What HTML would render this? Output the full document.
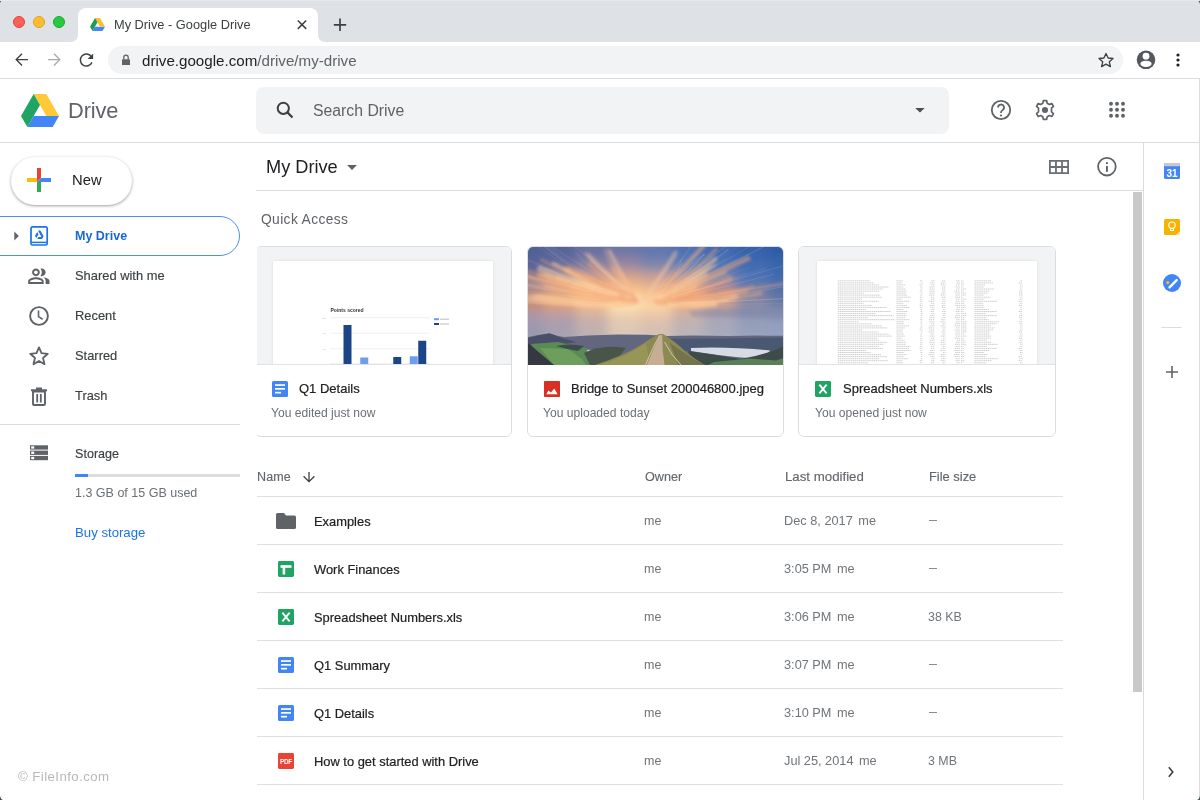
<!DOCTYPE html>
<html><head><meta charset="utf-8">
<style>
*{box-sizing:border-box}
html,body{margin:0;padding:0}
body{width:1200px;height:800px;position:relative;overflow:hidden;background:#fff;-webkit-font-smoothing:antialiased;font-family:"Liberation Sans",sans-serif;color:#202124}
.a{position:absolute}
.t{position:absolute;white-space:nowrap;line-height:1;will-change:transform}
svg{position:absolute;overflow:visible}
</style></head><body>


<!-- ============ CHROME ============ -->
<div class="a" style="left:0;top:0;width:1200px;height:42px;background:#dee1e6"></div>
<div class="a" style="left:13px;top:15.5px;width:12px;height:12px;border-radius:50%;background:#fe5f57;border:0.5px solid #e0443e"></div>
<div class="a" style="left:33px;top:15.5px;width:12px;height:12px;border-radius:50%;background:#febc2e;border:0.5px solid #dea123"></div>
<div class="a" style="left:53px;top:15.5px;width:12px;height:12px;border-radius:50%;background:#28c840;border:0.5px solid #1aab29"></div>
<!-- tab -->
<div class="a" style="left:78px;top:8px;width:240px;height:34px;background:#fff;border-radius:8px 8px 0 0"></div>
<svg style="left:0;top:0" width="1200" height="42">
  <path d="M70 42 Q78 42 78 34 L78 42Z" fill="#fff"/>
  <path d="M326 42 Q318 42 318 34 L318 42Z" fill="#fff"/>
  <g transform="translate(90,18) scale(0.0104)">
    <path fill="#4688f1" d="M240.525 1249.993l240.492-416.664h962.044l-240.514 416.664z"/>
    <path fill="#fbc02d" d="M962.055 833.329h481.006L962.055 0H481.017z"/>
    <path fill="#1e9b57" d="M0 833.329l240.525 416.664 481.006-833.328L481.017 0z"/>
  </g>
  <path d="M297.8 20.5 L306.2 28.9 M306.2 20.5 L297.8 28.9" stroke="#3c4043" stroke-width="1.5"/>
  <path d="M340 18.5 V31 M333.8 24.8 H346.2" stroke="#3c4043" stroke-width="1.7"/>
</svg>
<div class="t" style="left:114px;top:19px;font-size:12.8px;color:#3c4043">My Drive - Google Drive</div>

<!-- toolbar -->
<div class="a" style="left:0;top:78px;width:1200px;height:1px;background:#dadce0"></div>
<div class="a" style="left:108px;top:46px;width:1015px;height:28px;border-radius:14px;background:#f1f3f4"></div>
<svg style="left:0;top:42px" width="1200" height="36">
  <!-- back -->
  <path d="M28 17.6 H16.2 M22 11.8 L16.2 17.6 L22 23.4" fill="none" stroke="#3c4043" stroke-width="1.35"/>
  <!-- fwd -->
  <path d="M48 17.6 H59.8 M54 11.8 L59.8 17.6 L54 23.4" fill="none" stroke="#a8abae" stroke-width="1.35"/>
  <!-- reload -->
  <path d="M91.3 14.6 A6 6 0 1 0 91.9 20.4" fill="none" stroke="#3c4043" stroke-width="1.45"/>
  <path d="M93.1 11.4 V16.9 H87.6 Z" fill="#3c4043"/>
  <!-- lock -->
  <rect x="122" y="17.3" width="8" height="5.8" rx="0.6" fill="#5f6368"/>
  <path d="M123.8 17.5 V15.4 A2.2 2.2 0 0 1 128.2 15.4 V17.5" fill="none" stroke="#5f6368" stroke-width="1.3"/>
  <!-- star -->
  <path d="M1106 11.5 L1108.1 16 L1113 16.5 L1109.3 19.8 L1110.4 24.6 L1106 22.1 L1101.6 24.6 L1102.7 19.8 L1099 16.5 L1103.9 16 Z" fill="none" stroke="#3c4043" stroke-width="1.3" stroke-linejoin="round"/>
  <!-- profile -->
  <circle cx="1146" cy="17.8" r="9.3" fill="#54585d"/>
  <circle cx="1146" cy="14.2" r="3.4" fill="#fff"/>
  <ellipse cx="1146" cy="21.8" rx="5.6" ry="3.1" fill="#fff"/>
  <!-- menu -->
  <circle cx="1178" cy="13" r="1.6" fill="#202124"/>
  <circle cx="1178" cy="18" r="1.6" fill="#202124"/>
  <circle cx="1178" cy="23" r="1.6" fill="#202124"/>
</svg>
<div class="t" style="left:142px;top:52.8px;font-size:15.15px;color:#202124">drive.google.com<span style="color:#5f6368">/drive/my-drive</span></div>
<div class="a" style="left:1199px;top:79px;width:1px;height:721px;background:#dadce0"></div>


<!-- ============ DRIVE HEADER ============ -->
<svg style="left:21px;top:93.5px" width="38" height="33" viewBox="0 0 1443.061 1249.993">
  <path fill="#4285f4" d="M240.525 1249.993l240.492-416.664h962.044l-240.514 416.664z"/>
  <path fill="#ffc937" d="M962.055 833.329h481.006L962.055 0H481.017z"/>
  <path fill="#1fa463" d="M0 833.329l240.525 416.664 481.006-833.328L481.017 0z"/>
</svg>
<div class="t" style="left:67.6px;top:99.7px;font-size:21.8px;color:#5f6368;letter-spacing:-0.1px">Drive</div>
<div class="a" style="left:256px;top:86.5px;width:693px;height:47px;border-radius:8px;background:#f1f3f4"></div>
<svg style="left:0;top:79px" width="1200" height="63">
  <circle cx="283.3" cy="29.3" r="5.6" fill="none" stroke="#3c4043" stroke-width="2"/>
  <path d="M287.4 33.4 L292.5 38.5" stroke="#3c4043" stroke-width="2.2"/>
  <path d="M915.2 28.9 H924.7 L919.95 33.6 Z" fill="#4a4e52"/>
  <!-- help -->
  <circle cx="1001" cy="31" r="9.2" fill="none" stroke="#5f6368" stroke-width="1.8"/>
  <path d="M998 28.6 A3 3 0 1 1 1002.4 31.2 Q1001 32 1001 34" fill="none" stroke="#5f6368" stroke-width="1.8"/>
  <circle cx="1001" cy="36.5" r="1.1" fill="#5f6368"/>
  <!-- settings -->
  <g transform="translate(1045,31) scale(0.93)">
    <path d="M-1.8 -10 H1.8 L2.4 -7.2 L4.6 -6 L7.3 -7 L9.1 -3.9 L7 -2 V2 L9.1 3.9 L7.3 7 L4.6 6 L2.4 7.2 L1.8 10 H-1.8 L-2.4 7.2 L-4.6 6 L-7.3 7 L-9.1 3.9 L-7 2 V-2 L-9.1 -3.9 L-7.3 -7 L-4.6 -6 L-2.4 -7.2 Z" fill="none" stroke="#5f6368" stroke-width="1.8" stroke-linejoin="round"/>
    <circle cx="0" cy="0" r="3.3" fill="#5f6368"/>
  </g>
  <!-- apps -->
  <g fill="#5f6368"><circle cx="1111" cy="24.8" r="1.95"/><circle cx="1117" cy="24.8" r="1.95"/><circle cx="1123" cy="24.8" r="1.95"/><circle cx="1111" cy="30.8" r="1.95"/><circle cx="1117" cy="30.8" r="1.95"/><circle cx="1123" cy="30.8" r="1.95"/><circle cx="1111" cy="36.8" r="1.95"/><circle cx="1117" cy="36.8" r="1.95"/><circle cx="1123" cy="36.8" r="1.95"/></g>
</svg>
<div class="t" style="left:313px;top:103px;font-size:15.8px;color:#5f6368">Search Drive</div>
<div class="a" style="left:0;top:142px;width:1199px;height:1px;background:#dadce0"></div>


<!-- ============ SIDEBAR ============ -->
<div class="a" style="left:10.5px;top:156.5px;width:121px;height:48px;border-radius:24px;background:#fff;box-shadow:0 1px 2px 0 rgba(60,64,67,.30),0 1px 3px 1px rgba(60,64,67,.15)"></div>
<svg style="left:0;top:143px" width="256" height="657">
  <!-- plus -->
  <path d="M37 25 H41 V35 L37 39 Z" fill="#ea4335"/>
  <path d="M41 35 H51 V39 H37 Z" fill="#4285f4"/>
  <rect x="37" y="39" width="4" height="10" fill="#34a853"/>
  <rect x="27" y="35" width="10" height="4" fill="#fbbc04"/>
  <!-- selected my drive -->
  <path d="M-2 73.5 H220 A19.5 19.5 0 0 1 220 112.5 H-2 Z" fill="#fff" stroke="#4d8ef0" stroke-width="1"/>
    <!-- my drive icon -->
  <path d="M14.3 88.5 L18.8 93 L14.3 97.5 Z" fill="#5f6368"/>
  <rect x="31" y="83.8" width="16.2" height="18.2" rx="1.6" fill="none" stroke="#1a73e8" stroke-width="1.7"/>
  <path d="M31.5 99.4 H46.7" stroke="#1a73e8" stroke-width="1.5"/>
  <path d="M38 87.6 H40.4 L43.6 93.3 L42.3 95.6 Z M37.2 88.9 L38.5 91.2 L36.3 95 L35 92.8 Z M37.2 96.1 L38.4 94.1 H43.2 L42 96.1 Z" fill="#1a73e8"/>
  <!-- shared -->
  <g transform="translate(27.2 121.6) scale(0.97)" fill="#5f6368">
    <path d="M16.67 13.13C18.04 14.06 19 15.32 19 17v3h4v-3c0-2.18-3.57-3.47-6.33-3.87zM15 12c2.21 0 4-1.79 4-4s-1.79-4-4-4c-.47 0-.91.1-1.33.24C14.5 5.27 15 6.58 15 8s-.5 2.73-1.33 3.76c.42.14.86.24 1.33.24zm-6 0c2.21 0 4-1.79 4-4s-1.79-4-4-4-4 1.79-4 4 1.79 4 4 4zm0-6c1.1 0 2 .9 2 2s-.9 2-2 2-2-.9-2-2 .9-2 2-2zm0 7c-2.67 0-8 1.34-8 4v3h16v-3c0-2.66-5.33-4-8-4zm6 5H3v-.99C3.2 16.29 6.3 15 9 15s5.8 1.29 6 2v1z"/>
  </g>
  <!-- recent -->
  <circle cx="39" cy="173" r="8.9" fill="none" stroke="#5f6368" stroke-width="1.9"/>
  <path d="M38.5 167.5 V173.6 L42.6 176.2" fill="none" stroke="#5f6368" stroke-width="1.6"/>
  <!-- star -->
  <path d="M39 204.4 L41.5 210.2 L47.8 210.8 L43 215 L44.5 221.2 L39 217.9 L33.5 221.2 L35 215 L30.2 210.8 L36.5 210.2 Z" fill="none" stroke="#5f6368" stroke-width="1.8" stroke-linejoin="round"/>
  <!-- trash -->
  <path d="M33 248.5 H45 V261 Q45 262 44 262 H34 Q33 262 33 261 Z" fill="none" stroke="#5f6368" stroke-width="1.9"/>
  <path d="M31 247.2 H47 M36 245.5 H42" stroke="#5f6368" stroke-width="1.9"/>
  <path d="M37.2 251 V259.5 M40.8 251 V259.5" stroke="#5f6368" stroke-width="1.8"/>
  <!-- storage -->
  <rect x="30" y="302.3" width="18" height="4.3" fill="#5f6368"/>
  <rect x="30" y="307.6" width="18" height="4.3" fill="#5f6368"/>
  <rect x="30" y="312.9" width="18" height="4.3" fill="#5f6368"/>
  <rect x="31.2" y="303.3" width="3" height="2.3" fill="#fff"/>
  <rect x="31.2" y="308.6" width="3" height="2.3" fill="#fff"/>
  <rect x="31.2" y="313.9" width="3" height="2.3" fill="#fff"/>
</svg>
<div class="t" style="left:72.4px;top:172.6px;font-size:14.8px;color:#202124;font-weight:400;">New</div>
<div class="t" style="left:75.2px;top:229.9px;font-size:12.5px;color:#1967d2;font-weight:700;">My Drive</div>
<div class="t" style="left:75.4px;top:270.38px;font-size:12.9px;color:#3c4043;font-weight:400;-webkit-text-stroke:0.15px #3c4043">Shared with me</div>
<div class="t" style="left:75.4px;top:310.38px;font-size:12.9px;color:#3c4043;font-weight:400;-webkit-text-stroke:0.15px #3c4043">Recent</div>
<div class="t" style="left:75.4px;top:350.28px;font-size:12.9px;color:#3c4043;font-weight:400;-webkit-text-stroke:0.15px #3c4043">Starred</div>
<div class="t" style="left:75.4px;top:390.28px;font-size:12.9px;color:#3c4043;font-weight:400;-webkit-text-stroke:0.15px #3c4043">Trash</div>
<div class="a" style="left:0;top:424px;width:240px;height:1px;background:#dadce0"></div>
<div class="t" style="left:75.4px;top:447.53px;font-size:12.6px;color:#3c4043;font-weight:400;-webkit-text-stroke:0.15px #3c4043">Storage</div>
<div class="a" style="left:75px;top:474px;width:165px;height:3px;background:#dadce0"></div>
<div class="a" style="left:75px;top:474px;width:13px;height:3px;background:#4285f4"></div>
<div class="t" style="left:75.4px;top:486.72px;font-size:12.5px;color:#6b7075;font-weight:400;">1.3 GB of 15 GB used</div>
<div class="t" style="left:75.4px;top:526.13px;font-size:13.2px;color:#1a73e8;font-weight:400;">Buy storage</div>
<div class="t" style="left:17.5px;top:769.83px;font-size:13.2px;color:#b8b8b8;font-weight:400;letter-spacing:0.45px">&copy; FileInfo.com</div>


<!-- ============ MAIN HEADER ============ -->
<div class="t" style="left:265.9px;top:157.9px;font-size:18.2px;color:#202124;font-weight:400;">My Drive</div>
<svg style="left:0;top:143px" width="1200" height="657">
  <path d="M347 22 H357 L352 27 Z" fill="#5f6368"/>
  <!-- grid icon -->
  <g fill="#5f6368">
    <path d="M1049 17 H1069 V31 H1049 Z M1050.8 18.8 V23.1 H1055.07 V18.8 Z M1056.87 18.8 V23.1 H1061.13 V18.8 Z M1062.93 18.8 V23.1 H1067.2 V18.8 Z M1050.8 24.9 V29.2 H1055.07 V24.9 Z M1056.87 24.9 V29.2 H1061.13 V24.9 Z M1062.93 24.9 V29.2 H1067.2 V24.9 Z" fill-rule="evenodd" fill="#6b6e72"/>
  </g>
  <!-- info -->
  <circle cx="1106.9" cy="23.7" r="8.8" fill="none" stroke="#5f6368" stroke-width="1.8"/>
  <rect x="1106" y="23" width="1.9" height="5.8" fill="#5f6368"/>
  <rect x="1106" y="19.2" width="1.9" height="1.9" fill="#5f6368"/>
  <!-- right panel -->
  <g transform="translate(0,0)">
    <rect x="1164" y="20" width="16" height="16" rx="1.5" fill="#4285f4"/>
    <rect x="1164" y="20" width="16" height="3.2" rx="1" fill="#c6c9ce"/>
    <text x="1172" y="33.6" font-family="Liberation Sans" font-size="10" font-weight="700" fill="#fff" text-anchor="middle">31</text>
    <rect x="1164" y="76" width="16" height="16" rx="1.5" fill="#f6b400"/>
    <path d="M1176 92 L1180 88 V92 Z" fill="#fbe3a3"/>
    <circle cx="1172" cy="82.2" r="3.2" fill="none" stroke="#fff" stroke-width="1.1"/>
    <path d="M1170.5 85.2 V87.5 H1173.5 V85.2" fill="none" stroke="#fff" stroke-width="1.1"/>
    <circle cx="1172" cy="140" r="9" fill="#4285f4"/>
    <path d="M1169.5 144.3 L1176.7 137.1" stroke="#fff" stroke-width="2.4" stroke-linecap="round"/>
    <circle cx="1167.8" cy="139.6" r="1.6" fill="#fbbc04"/>
    <rect x="1161.5" y="184" width="20" height="1" fill="#dadce0"/>
    <path d="M1172 223 V235 M1166 229 H1178" stroke="#5f6368" stroke-width="1.6"/>
    <path d="M1168.8 624.2 L1172.8 629 L1168.8 633.8" fill="none" stroke="#3c4043" stroke-width="1.6"/>
  </g>
  <!-- scrollbar -->
  <rect x="1133" y="49" width="9" height="500" fill="#c8c8c8"/>
</svg>
<div class="a" style="left:256px;top:190px;width:887px;height:1px;background:#dadce0"></div>
<div class="a" style="left:1143px;top:143px;width:1px;height:657px;background:#dadce0"></div>

<!-- ============ QUICK ACCESS ============ -->
<div class="t" style="left:260.7px;top:213.32px;font-size:13.8px;color:#5f6368;font-weight:400;letter-spacing:0.38px">Quick Access</div>
<div class="a" style="left:257px;top:240px;width:876px;height:210px;overflow:hidden">
<div class="a" style="left:-2.25px;top:5.8px;width:257.5px;height:191px;border:1px solid #dadce0;border-radius:6px;overflow:hidden;background:#fff">
  <div class="a" style="left:0;top:0;width:256px;height:118px;background:#f1f3f4;overflow:hidden;border-bottom:1px solid #e0e2e5">
 <div class="a" style="left:17.25px;top:13.75px;width:220px;height:120px;background:#fff;box-shadow:0 0 3px rgba(0,0,0,.10)"></div>
 <svg style="left:0;top:0" width="256" height="118">
  <text x="74.5" y="65" font-family="Liberation Sans" font-size="5" font-weight="700" fill="#333">Points scored</text>
  <g stroke="#e6e6e6" stroke-width="0.6">
   <path d="M74 70.75 H174 M74 86.25 H174 M74 101.75 H174 M74 116.75 H174"/>
  </g>
  <g fill="#bbb" font-family="Liberation Sans" font-size="2.5">
   <text x="66" y="71.5">100</text><text x="67" y="87">75</text><text x="67" y="102.5">50</text>
  </g>
  <rect x="87.5" y="78" width="8" height="40" fill="#1c4587"/>
  <rect x="104.25" y="110.5" width="8" height="10" fill="#6d9eeb"/>
  <rect x="137.25" y="110" width="8" height="10" fill="#1c4587"/>
  <rect x="153.75" y="109.25" width="8" height="10" fill="#6d9eeb"/>
  <rect x="162.25" y="93.75" width="8" height="30" fill="#1c4587"/>
  <rect x="178" y="71.2" width="5" height="2" fill="#6d9eeb"/>
  <rect x="178" y="76" width="5" height="2" fill="#1c4587"/>
  <rect x="184" y="71.6" width="9" height="1.2" fill="#c8c8c8"/>
  <rect x="184" y="76.4" width="9" height="1.2" fill="#c8c8c8"/>
 </svg>
</div>
  <div class="t" style="left:43.4px;top:135.4px;font-size:13px;color:#202124;-webkit-text-stroke:0.2px #202124">Q1 Details</div>
  <div class="t" style="left:15.5px;top:160.2px;font-size:12.1px;color:#6b7075">You edited just now</div>
  <svg style="left:16px;top:134.2px" width="16" height="16"><rect x="0" y="0" width="16" height="16" rx="1.6" fill="#4285f4"/>
    <rect x="3" y="3.2" width="10" height="1.7" fill="#fff"/>
    <rect x="3" y="7" width="10" height="1.7" fill="#fff"/>
    <rect x="3" y="10.8" width="6" height="1.7" fill="#fff"/></svg>
</div>
<div class="a" style="left:269.50px;top:5.8px;width:257.5px;height:191px;border:1px solid #dadce0;border-radius:6px;overflow:hidden;background:#fff">
  <div class="a" style="left:0;top:0;width:256px;height:118px;overflow:hidden">
 <svg style="left:0;top:0" width="256" height="118" viewBox="0 0 256 118">
  <defs>
   <filter id="skyb" x="-10%" y="-10%" width="120%" height="120%"><feGaussianBlur stdDeviation="6"/></filter>
   <filter id="blt" x="-20%" y="-50%" width="140%" height="200%"><feGaussianBlur stdDeviation="1.8"/></filter>
   <filter id="bl" x="-20%" y="-50%" width="140%" height="200%"><feGaussianBlur stdDeviation="0.6"/></filter>
   <filter id="bl2"><feGaussianBlur stdDeviation="0.5"/></filter>
  </defs>
  <g filter="url(#skyb)"><rect x="-30" y="-20" width="46" height="31" fill="#4e6296"/><rect x="16" y="-20" width="32" height="31" fill="#566499"/><rect x="48" y="-20" width="32" height="31" fill="#6670a0"/><rect x="80" y="-20" width="32" height="31" fill="#6c76a6"/><rect x="112" y="-20" width="32" height="31" fill="#6276b0"/><rect x="144" y="-20" width="32" height="31" fill="#4e70b4"/><rect x="176" y="-20" width="32" height="31" fill="#4068b2"/><rect x="208" y="-20" width="32" height="31" fill="#3662ac"/><rect x="240" y="-20" width="50" height="31" fill="#2e5ca6"/><rect x="-30" y="11" width="46" height="14" fill="#5a6498"/><rect x="16" y="11" width="32" height="14" fill="#646c9c"/><rect x="48" y="11" width="32" height="14" fill="#8a82a0"/><rect x="80" y="11" width="32" height="14" fill="#9a88a0"/><rect x="112" y="11" width="32" height="14" fill="#7e86ac"/><rect x="144" y="11" width="32" height="14" fill="#6280b6"/><rect x="176" y="11" width="32" height="14" fill="#5076b6"/><rect x="208" y="11" width="32" height="14" fill="#426cb2"/><rect x="240" y="11" width="50" height="14" fill="#3866ac"/><rect x="-30" y="25" width="46" height="14" fill="#786e90"/><rect x="16" y="25" width="32" height="14" fill="#9a8090"/><rect x="48" y="25" width="32" height="14" fill="#d09c88"/><rect x="80" y="25" width="32" height="14" fill="#e0a888"/><rect x="112" y="25" width="32" height="14" fill="#d0a494"/><rect x="144" y="25" width="32" height="14" fill="#b89c9c"/><rect x="176" y="25" width="32" height="14" fill="#7c84ac"/><rect x="208" y="25" width="32" height="14" fill="#5074b2"/><rect x="240" y="25" width="50" height="14" fill="#446cae"/><rect x="-30" y="39" width="46" height="14" fill="#b08480"/><rect x="16" y="39" width="32" height="14" fill="#d89878"/><rect x="48" y="39" width="32" height="14" fill="#f0b07c"/><rect x="80" y="39" width="32" height="14" fill="#ffcc90"/><rect x="112" y="39" width="32" height="14" fill="#f8c090"/><rect x="144" y="39" width="32" height="14" fill="#eca878"/><rect x="176" y="39" width="32" height="14" fill="#cc9080"/><rect x="208" y="39" width="32" height="14" fill="#7c80a4"/><rect x="240" y="39" width="50" height="14" fill="#5472aa"/><rect x="-30" y="51" width="46" height="14" fill="#c88c74"/><rect x="16" y="51" width="32" height="14" fill="#e4a070"/><rect x="48" y="51" width="32" height="14" fill="#f6be88"/><rect x="80" y="51" width="32" height="14" fill="#ffe8b8"/><rect x="112" y="51" width="32" height="14" fill="#ffd8a4"/><rect x="144" y="51" width="32" height="14" fill="#eeb080"/><rect x="176" y="51" width="32" height="14" fill="#cc9c88"/><rect x="208" y="51" width="32" height="14" fill="#8888a4"/><rect x="240" y="51" width="50" height="14" fill="#6c7ca4"/><rect x="-30" y="63" width="46" height="14" fill="#a898ac"/><rect x="16" y="63" width="32" height="14" fill="#b49ca8"/><rect x="48" y="63" width="32" height="14" fill="#d0b0a4"/><rect x="80" y="63" width="32" height="14" fill="#ecccac"/><rect x="112" y="63" width="32" height="14" fill="#e8c4a8"/><rect x="144" y="63" width="32" height="14" fill="#c8b0a8"/><rect x="176" y="63" width="32" height="14" fill="#a8a4b4"/><rect x="208" y="63" width="32" height="14" fill="#9098b4"/><rect x="240" y="63" width="50" height="14" fill="#8c98b8"/><rect x="-30" y="75" width="46" height="25" fill="#9c98b0"/><rect x="16" y="75" width="32" height="25" fill="#a8a0b0"/><rect x="48" y="75" width="32" height="25" fill="#c0b0b0"/><rect x="80" y="75" width="32" height="25" fill="#dcc8b8"/><rect x="112" y="75" width="32" height="25" fill="#d4c0b4"/><rect x="144" y="75" width="32" height="25" fill="#bcb4b8"/><rect x="176" y="75" width="32" height="25" fill="#a8aabc"/><rect x="208" y="75" width="32" height="25" fill="#98a2bc"/><rect x="240" y="75" width="50" height="25" fill="#94a0c0"/></g>
  <g filter="url(#blt)"><path d="M111.0 56.0 Q96.2 33.5 81.7 3.5" stroke="#f6c8a0" stroke-width="3.3" opacity="0.33" fill="none" stroke-linecap="round"/><path d="M111.0 56.0 Q92.6 34.0 78.1 4.0" stroke="#f6c8a0" stroke-width="5.2" opacity="0.21" fill="none" stroke-linecap="round"/><path d="M111.0 56.0 Q96.9 34.5 82.4 4.5" stroke="#f6c8a0" stroke-width="3.1" opacity="0.26" fill="none" stroke-linecap="round"/><path d="M108.0 52.0 Q85.6 33.8 61.6 7.8" stroke="#f6c8a0" stroke-width="3.9" opacity="0.22" fill="none" stroke-linecap="round"/><path d="M108.0 52.0 Q81.9 32.4 57.9 6.4" stroke="#f6c8a0" stroke-width="3.4" opacity="0.34" fill="none" stroke-linecap="round"/><path d="M108.0 52.0 Q84.7 35.1 60.7 9.1" stroke="#f6c8a0" stroke-width="3.2" opacity="0.31" fill="none" stroke-linecap="round"/><path d="M115.0 54.0 Q129.3 33.2 146.8 5.2" stroke="#f6c8a0" stroke-width="3.3" opacity="0.31" fill="none" stroke-linecap="round"/><path d="M115.0 54.0 Q131.9 32.4 149.4 4.4" stroke="#f6c8a0" stroke-width="2.6" opacity="0.23" fill="none" stroke-linecap="round"/><path d="M115.0 54.0 Q130.7 35.2 148.2 7.2" stroke="#f6c8a0" stroke-width="2.4" opacity="0.33" fill="none" stroke-linecap="round"/><path d="M120.0 56.0 Q155.5 40.2 188.0 18.2" stroke="#f6c8a0" stroke-width="2.4" opacity="0.27" fill="none" stroke-linecap="round"/><path d="M120.0 56.0 Q148.7 41.7 181.2 19.7" stroke="#f6c8a0" stroke-width="3.2" opacity="0.22" fill="none" stroke-linecap="round"/><path d="M120.0 56.0 Q153.3 40.5 185.8 18.5" stroke="#f6c8a0" stroke-width="2.7" opacity="0.33" fill="none" stroke-linecap="round"/><path d="M100.0 55.0 Q57.6 44.5 17.6 28.0" stroke="#f6c8a0" stroke-width="3.2" opacity="0.28" fill="none" stroke-linecap="round"/><path d="M100.0 55.0 Q56.1 44.8 16.1 28.3" stroke="#f6c8a0" stroke-width="4.2" opacity="0.34" fill="none" stroke-linecap="round"/><path d="M100.0 55.0 Q59.4 46.1 19.4 29.6" stroke="#f6c8a0" stroke-width="4.6" opacity="0.21" fill="none" stroke-linecap="round"/><path d="M104.0 58.0 Q57.6 56.7 10.6 48.7" stroke="#f6c8a0" stroke-width="3.6" opacity="0.34" fill="none" stroke-linecap="round"/><path d="M104.0 58.0 Q53.4 58.2 6.4 50.2" stroke="#f6c8a0" stroke-width="3.6" opacity="0.22" fill="none" stroke-linecap="round"/><path d="M104.0 58.0 Q55.1 60.0 8.1 52.0" stroke="#f6c8a0" stroke-width="4.4" opacity="0.22" fill="none" stroke-linecap="round"/></g><g filter="url(#blt)"><path d="M86.5 48.5 Q63.6 41.4 29.6 31.3" stroke="#ffc890" stroke-width="4.3" opacity="0.49" fill="none" stroke-linecap="round"/><path d="M147.0 55.4 Q176.7 60.2 207.8 49.8" stroke="#ffd8a8" stroke-width="4.4" opacity="0.46" fill="none" stroke-linecap="round"/><path d="M97.5 54.1 Q55.4 50.4 17.0 38.9" stroke="#f8b07a" stroke-width="3.2" opacity="0.26" fill="none" stroke-linecap="round"/><path d="M107.2 53.2 Q76.3 39.2 37.5 22.1" stroke="#f0a274" stroke-width="5.7" opacity="0.52" fill="none" stroke-linecap="round"/><path d="M136.6 53.8 Q147.3 56.1 167.8 46.9" stroke="#f0a274" stroke-width="6.0" opacity="0.40" fill="none" stroke-linecap="round"/><path d="M98.3 49.2 Q58.1 34.2 25.6 16.6" stroke="#ffd8a8" stroke-width="3.7" opacity="0.53" fill="none" stroke-linecap="round"/><path d="M128.7 56.5 Q175.0 52.0 217.5 43.6" stroke="#ffc890" stroke-width="5.7" opacity="0.30" fill="none" stroke-linecap="round"/><path d="M130.2 53.4 Q152.3 52.6 167.2 39.4" stroke="#ffc890" stroke-width="4.2" opacity="0.50" fill="none" stroke-linecap="round"/><path d="M131.6 57.2 Q160.0 56.1 182.9 54.2" stroke="#f0a274" stroke-width="3.0" opacity="0.45" fill="none" stroke-linecap="round"/><path d="M97.2 53.2 Q41.2 41.5 -14.2 27.6" stroke="#ffc890" stroke-width="4.6" opacity="0.29" fill="none" stroke-linecap="round"/><path d="M131.8 43.6 Q161.6 15.6 189.4 -16.6" stroke="#f8b07a" stroke-width="3.9" opacity="0.54" fill="none" stroke-linecap="round"/><path d="M89.1 53.8 Q71.1 54.0 62.2 49.8" stroke="#f0a274" stroke-width="3.6" opacity="0.53" fill="none" stroke-linecap="round"/><path d="M146.0 53.2 Q185.4 52.4 224.7 39.7" stroke="#f0a274" stroke-width="2.7" opacity="0.53" fill="none" stroke-linecap="round"/><path d="M138.6 48.6 Q176.2 31.3 220.0 11.5" stroke="#f0a274" stroke-width="5.0" opacity="0.55" fill="none" stroke-linecap="round"/><path d="M96.7 52.5 Q72.1 51.8 44.4 39.0" stroke="#ffd8a8" stroke-width="3.2" opacity="0.43" fill="none" stroke-linecap="round"/><path d="M92.7 47.1 Q52.3 34.8 13.2 12.6" stroke="#f0a274" stroke-width="2.6" opacity="0.44" fill="none" stroke-linecap="round"/><path d="M128.1 54.8 Q162.0 48.7 201.9 31.4" stroke="#f0a274" stroke-width="5.4" opacity="0.47" fill="none" stroke-linecap="round"/><path d="M94.3 50.5 Q78.1 49.5 69.7 42.7" stroke="#f0a274" stroke-width="4.6" opacity="0.31" fill="none" stroke-linecap="round"/><path d="M147.8 53.4 Q210.0 44.7 260.4 35.9" stroke="#f0a274" stroke-width="3.6" opacity="0.34" fill="none" stroke-linecap="round"/><path d="M98.7 57.0 Q52.2 62.1 -5.9 51.4" stroke="#ffd8a8" stroke-width="3.1" opacity="0.38" fill="none" stroke-linecap="round"/><path d="M132.2 50.8 Q158.9 40.5 177.3 27.7" stroke="#ffd8a8" stroke-width="4.9" opacity="0.31" fill="none" stroke-linecap="round"/><path d="M144.3 55.3 Q190.9 55.6 233.5 46.1" stroke="#f8b07a" stroke-width="2.8" opacity="0.54" fill="none" stroke-linecap="round"/><path d="M101.4 50.8 Q69.9 45.4 39.6 24.2" stroke="#ffd8a8" stroke-width="5.8" opacity="0.29" fill="none" stroke-linecap="round"/><path d="M90.7 50.2 Q44.2 37.2 -3.0 23.3" stroke="#f8b07a" stroke-width="3.2" opacity="0.37" fill="none" stroke-linecap="round"/><path d="M90.7 50.3 Q46.0 42.7 11.7 28.1" stroke="#f8b07a" stroke-width="5.4" opacity="0.55" fill="none" stroke-linecap="round"/><path d="M96.2 57.3 Q40.3 57.7 -11.8 53.8" stroke="#ffc890" stroke-width="3.7" opacity="0.34" fill="none" stroke-linecap="round"/><path d="M105.4 48.7 Q79.5 37.3 61.6 16.4" stroke="#f0a274" stroke-width="3.5" opacity="0.49" fill="none" stroke-linecap="round"/><path d="M103.0 57.5 Q81.3 60.1 48.7 55.8" stroke="#ffc890" stroke-width="3.6" opacity="0.32" fill="none" stroke-linecap="round"/><path d="M144.8 47.1 Q165.6 38.6 197.9 25.6" stroke="#ffc890" stroke-width="2.7" opacity="0.45" fill="none" stroke-linecap="round"/><path d="M134.0 45.3 Q164.1 28.9 188.1 2.3" stroke="#f0a274" stroke-width="3.1" opacity="0.53" fill="none" stroke-linecap="round"/><path d="M89.8 53.1 Q38.5 45.4 -22.6 33.8" stroke="#ffd8a8" stroke-width="4.6" opacity="0.36" fill="none" stroke-linecap="round"/><path d="M97.7 48.1 Q69.2 35.8 40.8 20.4" stroke="#f0a274" stroke-width="3.2" opacity="0.31" fill="none" stroke-linecap="round"/><path d="M107.8 55.5 Q52.0 48.0 -5.8 27.7" stroke="#f8b07a" stroke-width="5.1" opacity="0.47" fill="none" stroke-linecap="round"/><path d="M133.0 48.0 Q164.4 34.6 187.0 12.2" stroke="#ffc890" stroke-width="5.2" opacity="0.45" fill="none" stroke-linecap="round"/><path d="M145.2 53.8 Q156.4 52.4 173.5 49.3" stroke="#f0a274" stroke-width="4.8" opacity="0.47" fill="none" stroke-linecap="round"/><path d="M104.9 43.5 Q99.1 34.8 85.3 21.8" stroke="#f8b07a" stroke-width="4.9" opacity="0.34" fill="none" stroke-linecap="round"/><path d="M85.7 55.5 Q31.6 51.4 -23.1 47.1" stroke="#ffd8a8" stroke-width="5.4" opacity="0.34" fill="none" stroke-linecap="round"/><path d="M152.9 56.8 Q174.5 60.1 191.2 55.6" stroke="#f0a274" stroke-width="4.4" opacity="0.41" fill="none" stroke-linecap="round"/><path d="M96.6 48.5 Q68.0 37.4 39.1 22.8" stroke="#f0a274" stroke-width="5.3" opacity="0.26" fill="none" stroke-linecap="round"/><path d="M106.0 53.5 Q87.0 53.0 73.4 41.4" stroke="#f0a274" stroke-width="3.5" opacity="0.54" fill="none" stroke-linecap="round"/><path d="M92.1 55.9 Q44.5 53.4 6.0 49.0" stroke="#ffc890" stroke-width="5.0" opacity="0.31" fill="none" stroke-linecap="round"/><path d="M88.6 48.0 Q54.0 38.1 11.9 21.8" stroke="#ffd8a8" stroke-width="5.9" opacity="0.49" fill="none" stroke-linecap="round"/><path d="M142.5 57.8 Q169.5 58.2 186.2 57.3" stroke="#ffd8a8" stroke-width="5.9" opacity="0.48" fill="none" stroke-linecap="round"/><path d="M86.0 53.1 Q58.8 54.4 40.8 46.3" stroke="#f8b07a" stroke-width="4.2" opacity="0.50" fill="none" stroke-linecap="round"/><path d="M87.3 50.8 Q79.8 55.0 66.3 45.9" stroke="#f0a274" stroke-width="4.3" opacity="0.28" fill="none" stroke-linecap="round"/></g>
  <g filter="url(#bl)"><path d="M98.1 43.1 Q67.7 29.8 47.5 5.4" stroke="#ffe8d0" stroke-width="1.2" opacity="0.07" fill="none" stroke-linecap="round"/><path d="M92.2 52.6 Q39.6 46.2 -11.4 30.9" stroke="#ffd8b8" stroke-width="1.3" opacity="0.08" fill="none" stroke-linecap="round"/><path d="M88.3 34.0 Q78.3 28.2 62.6 13.2" stroke="#ffe8d0" stroke-width="1.4" opacity="0.13" fill="none" stroke-linecap="round"/><path d="M85.3 38.0 Q40.6 18.7 11.0 -7.5" stroke="#f0d0c0" stroke-width="1.7" opacity="0.07" fill="none" stroke-linecap="round"/><path d="M74.3 42.0 Q46.2 33.6 11.7 19.1" stroke="#ffd8b8" stroke-width="1.8" opacity="0.10" fill="none" stroke-linecap="round"/><path d="M130.6 43.6 Q136.1 32.5 154.7 16.0" stroke="#f0d0c0" stroke-width="1.5" opacity="0.05" fill="none" stroke-linecap="round"/><path d="M158.7 52.7 Q191.3 52.6 227.5 43.8" stroke="#f0d0c0" stroke-width="0.8" opacity="0.08" fill="none" stroke-linecap="round"/><path d="M131.2 39.6 Q161.5 5.8 180.8 -29.7" stroke="#ffd8b8" stroke-width="1.1" opacity="0.13" fill="none" stroke-linecap="round"/><path d="M104.4 47.7 Q70.5 28.2 47.4 4.5" stroke="#ffe8d0" stroke-width="0.9" opacity="0.05" fill="none" stroke-linecap="round"/><path d="M92.0 48.0 Q44.6 30.3 -6.2 10.2" stroke="#ffd8b8" stroke-width="0.9" opacity="0.11" fill="none" stroke-linecap="round"/><path d="M144.8 50.4 Q199.4 34.5 268.8 15.1" stroke="#ffe8d0" stroke-width="1.0" opacity="0.12" fill="none" stroke-linecap="round"/><path d="M79.9 37.5 Q67.5 31.5 48.0 20.3" stroke="#ffd8b8" stroke-width="0.8" opacity="0.08" fill="none" stroke-linecap="round"/><path d="M90.8 41.9 Q42.2 23.1 9.6 -6.4" stroke="#ffd8b8" stroke-width="1.7" opacity="0.13" fill="none" stroke-linecap="round"/><path d="M88.8 46.9 Q34.7 30.0 -9.3 9.5" stroke="#ffe8d0" stroke-width="1.5" opacity="0.07" fill="none" stroke-linecap="round"/><path d="M88.3 53.0 Q36.9 48.5 -2.3 37.6" stroke="#ffe8d0" stroke-width="0.8" opacity="0.05" fill="none" stroke-linecap="round"/><path d="M84.9 47.1 Q52.3 41.4 29.4 28.8" stroke="#ffd8b8" stroke-width="1.0" opacity="0.10" fill="none" stroke-linecap="round"/><path d="M145.9 42.2 Q187.9 19.2 242.9 -12.6" stroke="#ffd8b8" stroke-width="1.0" opacity="0.11" fill="none" stroke-linecap="round"/><path d="M156.7 55.3 Q174.6 59.6 199.2 52.2" stroke="#f0d0c0" stroke-width="0.9" opacity="0.09" fill="none" stroke-linecap="round"/><path d="M93.5 43.0 Q56.5 20.1 14.0 -5.9" stroke="#ffe8d0" stroke-width="1.5" opacity="0.08" fill="none" stroke-linecap="round"/><path d="M146.0 54.3 Q198.1 50.8 258.7 39.2" stroke="#f0d0c0" stroke-width="1.0" opacity="0.13" fill="none" stroke-linecap="round"/><path d="M149.5 34.6 Q163.8 31.3 173.1 17.1" stroke="#ffd8b8" stroke-width="0.9" opacity="0.10" fill="none" stroke-linecap="round"/><path d="M79.1 37.4 Q52.4 29.7 32.1 12.5" stroke="#f0d0c0" stroke-width="1.8" opacity="0.06" fill="none" stroke-linecap="round"/><path d="M140.5 43.8 Q175.4 21.8 219.8 -6.4" stroke="#ffd8b8" stroke-width="0.9" opacity="0.06" fill="none" stroke-linecap="round"/><path d="M74.3 55.2 Q30.9 57.3 0.7 50.6" stroke="#f0d0c0" stroke-width="1.1" opacity="0.11" fill="none" stroke-linecap="round"/><path d="M148.7 48.3 Q183.2 40.0 219.3 26.0" stroke="#ffe8d0" stroke-width="1.0" opacity="0.10" fill="none" stroke-linecap="round"/><path d="M154.9 54.5 Q179.3 55.2 211.3 49.1" stroke="#f0d0c0" stroke-width="1.3" opacity="0.07" fill="none" stroke-linecap="round"/><path d="M153.6 40.3 Q191.7 22.3 236.7 -1.0" stroke="#ffd8b8" stroke-width="1.8" opacity="0.05" fill="none" stroke-linecap="round"/><path d="M91.1 48.9 Q58.9 44.1 34.4 29.9" stroke="#ffe8d0" stroke-width="0.9" opacity="0.10" fill="none" stroke-linecap="round"/><path d="M87.8 50.6 Q65.1 50.5 41.8 39.5" stroke="#f0d0c0" stroke-width="0.8" opacity="0.10" fill="none" stroke-linecap="round"/><path d="M137.4 53.3 Q186.7 42.3 245.5 27.3" stroke="#ffe8d0" stroke-width="1.1" opacity="0.11" fill="none" stroke-linecap="round"/><path d="M71.0 52.4 Q31.4 48.5 -18.8 41.7" stroke="#ffd8b8" stroke-width="1.2" opacity="0.08" fill="none" stroke-linecap="round"/><path d="M71.8 46.5 Q37.3 39.5 0.1 28.7" stroke="#ffe8d0" stroke-width="1.5" opacity="0.11" fill="none" stroke-linecap="round"/><path d="M130.1 42.3 Q149.1 32.7 153.3 12.3" stroke="#f0d0c0" stroke-width="1.3" opacity="0.12" fill="none" stroke-linecap="round"/><path d="M90.9 53.9 Q40.8 50.3 -18.2 37.3" stroke="#ffd8b8" stroke-width="1.1" opacity="0.09" fill="none" stroke-linecap="round"/><path d="M94.9 51.8 Q53.9 43.9 8.2 28.3" stroke="#f0d0c0" stroke-width="1.7" opacity="0.06" fill="none" stroke-linecap="round"/><path d="M87.0 41.1 Q44.4 25.9 10.8 -0.3" stroke="#ffd8b8" stroke-width="1.4" opacity="0.07" fill="none" stroke-linecap="round"/><path d="M144.6 44.8 Q195.6 20.3 253.1 -8.9" stroke="#ffe8d0" stroke-width="0.9" opacity="0.11" fill="none" stroke-linecap="round"/><path d="M153.7 52.6 Q199.1 44.8 259.0 36.6" stroke="#ffd8b8" stroke-width="1.2" opacity="0.09" fill="none" stroke-linecap="round"/><path d="M146.0 41.8 Q166.0 30.0 198.2 11.5" stroke="#ffd8b8" stroke-width="1.3" opacity="0.08" fill="none" stroke-linecap="round"/><path d="M88.4 54.3 Q30.4 48.5 -22.6 40.6" stroke="#f0d0c0" stroke-width="1.5" opacity="0.08" fill="none" stroke-linecap="round"/><path d="M143.0 50.3 Q196.4 36.2 238.3 21.1" stroke="#ffe8d0" stroke-width="0.9" opacity="0.08" fill="none" stroke-linecap="round"/><path d="M141.9 40.9 Q181.9 9.6 235.3 -26.3" stroke="#f0d0c0" stroke-width="1.3" opacity="0.11" fill="none" stroke-linecap="round"/><path d="M85.9 41.7 Q70.5 36.1 61.4 29.2" stroke="#f0d0c0" stroke-width="1.5" opacity="0.06" fill="none" stroke-linecap="round"/><path d="M68.8 57.1 Q18.9 57.4 -20.1 55.3" stroke="#f0d0c0" stroke-width="1.2" opacity="0.10" fill="none" stroke-linecap="round"/><path d="M152.6 47.6 Q176.2 41.2 194.9 34.8" stroke="#f0d0c0" stroke-width="0.8" opacity="0.11" fill="none" stroke-linecap="round"/><path d="M160.7 55.8 Q217.5 54.7 273.9 50.0" stroke="#ffe8d0" stroke-width="1.2" opacity="0.11" fill="none" stroke-linecap="round"/><path d="M131.3 46.4 Q146.4 28.9 175.9 7.8" stroke="#ffe8d0" stroke-width="1.2" opacity="0.11" fill="none" stroke-linecap="round"/><path d="M143.5 40.3 Q164.5 31.5 174.1 19.0" stroke="#ffe8d0" stroke-width="1.2" opacity="0.11" fill="none" stroke-linecap="round"/><path d="M138.5 57.7 Q211.1 57.6 277.4 55.8" stroke="#ffd8b8" stroke-width="1.0" opacity="0.06" fill="none" stroke-linecap="round"/><path d="M74.5 53.0 Q32.7 52.1 -1.3 44.3" stroke="#ffd8b8" stroke-width="0.9" opacity="0.05" fill="none" stroke-linecap="round"/><path d="M78.2 42.4 Q62.3 40.5 50.7 31.5" stroke="#ffd8b8" stroke-width="1.2" opacity="0.08" fill="none" stroke-linecap="round"/><path d="M150.8 56.1 Q192.4 55.4 229.1 51.5" stroke="#f0d0c0" stroke-width="1.3" opacity="0.07" fill="none" stroke-linecap="round"/><path d="M166.1 49.4 Q194.6 48.3 208.5 41.9" stroke="#f0d0c0" stroke-width="1.1" opacity="0.08" fill="none" stroke-linecap="round"/><path d="M132.4 45.4 Q156.5 30.0 176.2 7.1" stroke="#ffe8d0" stroke-width="1.7" opacity="0.13" fill="none" stroke-linecap="round"/><path d="M145.5 39.5 Q170.5 24.8 200.0 2.8" stroke="#ffe8d0" stroke-width="1.7" opacity="0.13" fill="none" stroke-linecap="round"/><path d="M152.0 56.4 Q217.6 54.1 285.0 50.2" stroke="#ffe8d0" stroke-width="0.9" opacity="0.13" fill="none" stroke-linecap="round"/><path d="M71.6 51.7 Q17.6 46.6 -24.4 38.5" stroke="#ffe8d0" stroke-width="1.3" opacity="0.05" fill="none" stroke-linecap="round"/><path d="M152.6 55.8 Q168.8 54.6 199.7 52.8" stroke="#ffe8d0" stroke-width="1.4" opacity="0.09" fill="none" stroke-linecap="round"/><path d="M98.2 42.3 Q74.7 18.4 35.9 -7.2" stroke="#ffd8b8" stroke-width="1.0" opacity="0.12" fill="none" stroke-linecap="round"/><path d="M154.2 44.8 Q181.4 35.6 221.4 20.1" stroke="#ffe8d0" stroke-width="0.8" opacity="0.08" fill="none" stroke-linecap="round"/></g>
  <path d="M160 64 Q200 60 256 62 V72 Q210 70 165 70 Z" fill="#7880a4" opacity="0.35" filter="url(#blt)"/>
  <g filter="url(#bl2)">
  <path d="M0 90 L10 88 L21.5 86.2 L30 89 L36 90 L60 88.6 L90 87.6 L118 87.8 L140 89 L165 88.6 L200 89 L230 88.6 L256 88.8 V118 H0 Z" fill="#62667e"/>
  <path d="M0 91 L10 88.5 L21.5 86.4 L34 91 L48 95 L20 100 L0 98 Z" fill="#4a5068"/>
  <path d="M140 92 L256 90.5 V104 L140 104 Z" fill="#4c5872"/>
  <path d="M163 101 Q200 99.5 242 103.5 Q238 110 225 111.5 Q190 108.5 163 104 Z" fill="#d6dbe6"/>
  <ellipse cx="60.5" cy="104.5" rx="6.5" ry="1.7" fill="#e4e6ea"/>
  <path d="M3 97 L30 95 L58 101 L66 118 H18 Z" fill="#5a8a58"/>
  <path d="M12 101 L40 102 L54 112 L58 118 H26 Z" fill="#6e9e5c"/>
  <path d="M28 99 Q40 96 56 99 L50 104 Q38 102 28 99 Z" fill="#3e4e4a"/>
  <path d="M0 96 L26 118 H0 Z" fill="#363840"/>
  <path d="M56 106 Q74 97 98 101 L84 118 H62 Z" fill="#4a5448"/>
  <path d="M160 104 Q190 108 212 112 Q238 108 256 99 V118 H166 Z" fill="#3c4c4a"/>
  <path d="M186 115 L222 111.5 L248 113.5 L256 111 V118 H180 Z" fill="#5a8058"/>
  <path d="M66.7 118 Q98 108 116 96 Q126 89 131.5 87 L135 87 Q148 95 158 105 Q168 113 177 118 Z" fill="#8c8a52"/>
  <path d="M72 118 Q100 109 118 96 L122 118 Z" fill="#a29e5e" opacity="0.55"/>
  <path d="M142 96 Q158 108 177 118 H150 Z" fill="#6a6a48" opacity="0.7"/>
  <path d="M119 118 Q126 100 132 88 L134.2 88 Q134 102 136.5 118 Z" fill="#c6ae94"/>
  <path d="M117.5 118 Q125 100 131.5 88.5 M136.5 95 Q143 108 153 118" stroke="#dccab2" stroke-width="0.9" fill="none"/>
  </g>
 </svg>
</div>
  <div class="t" style="left:43.4px;top:135.4px;font-size:13px;color:#202124;-webkit-text-stroke:0.2px #202124">Bridge to Sunset 200046800.jpeg</div>
  <div class="t" style="left:15.5px;top:160.2px;font-size:12.1px;color:#6b7075">You uploaded today</div>
  <svg style="left:16px;top:134.2px" width="16" height="16"><rect x="0" y="0" width="16" height="16" rx="0.8" fill="#d93025"/>
    <path d="M2.3 13.3 L4.4 9.6 L6.9 11.6 L10.3 7.4 L13.6 13.3 Z" fill="#fff"/></svg>
</div>
<div class="a" style="left:541.25px;top:5.8px;width:257.5px;height:191px;border:1px solid #dadce0;border-radius:6px;overflow:hidden;background:#fff">
  <div class="a" style="left:0;top:0;width:256px;height:118px;background:#f1f3f4;overflow:hidden;border-bottom:1px solid #e0e2e5">
 <div class="a" style="left:17.5px;top:14.25px;width:220.5px;height:120px;background:#fff;box-shadow:0 0 3px rgba(0,0,0,.10)">
  <svg style="left:0;top:0" width="221" height="104"><path d="M20.8 19.8h32.2 M79.5 19.8h6.5 M103.0 19.8h2.5 M114.3 19.8h3.2 M124.7 19.8h3.8 M138.9 19.8h4.1 M144.0 19.8h2.3 M157.5 19.8h16.7 M203.4 19.8h2.1 M20.8 21.9h36.3 M79.5 21.9h5.7 M103.9 21.9h1.6 M113.2 21.9h4.3 M123.9 21.9h4.6 M139.6 21.9h3.4 M144.0 21.9h3.0 M157.5 21.9h18.6 M201.6 21.9h3.9 M20.8 23.9h41.7 M79.5 23.9h8.8 M102.5 23.9h3.0 M114.4 23.9h3.1 M123.9 23.9h4.6 M139.1 23.9h3.9 M144.0 23.9h2.7 M157.5 23.9h10.5 M202.9 23.9h2.6 M20.8 26.0h50.6 M79.5 26.0h6.8 M103.1 26.0h2.4 M112.6 26.0h4.9 M125.1 26.0h3.4 M138.4 26.0h4.6 M144.0 26.0h2.3 M157.5 26.0h9.5 M203.1 26.0h2.4 M20.8 28.0h45.6 M79.5 28.0h9.1 M103.5 28.0h2.0 M112.7 28.0h4.8 M124.9 28.0h3.6 M139.1 28.0h3.9 M144.0 28.0h5.2 M157.5 28.0h19.7 M203.0 28.0h2.5 M20.8 30.1h41.6 M79.5 30.1h10.0 M102.7 30.1h2.8 M112.3 30.1h5.2 M125.3 30.1h3.2 M137.1 30.1h5.9 M144.0 30.1h2.6 M157.5 30.1h15.2 M202.0 30.1h3.5 M20.8 32.1h25.8 M79.5 32.1h9.7 M103.9 32.1h1.6 M112.5 32.1h5.0 M124.1 32.1h4.4 M138.3 32.1h4.7 M144.0 32.1h5.5 M157.5 32.1h13.6 M202.1 32.1h3.4 M20.8 34.1h42.3 M79.5 34.1h10.5 M103.3 34.1h2.2 M112.0 34.1h5.5 M123.6 34.1h4.9 M138.6 34.1h4.4 M144.0 34.1h4.7 M157.5 34.1h9.5 M202.1 34.1h3.4 M20.8 36.2h44.3 M79.5 36.2h14.4 M102.8 36.2h2.7 M113.6 36.2h3.9 M125.0 36.2h3.5 M138.0 36.2h5.0 M144.0 36.2h2.2 M157.5 36.2h15.9 M203.2 36.2h2.3 M20.8 38.2h24.5 M79.5 38.2h5.6 M102.8 38.2h2.7 M114.1 38.2h3.4 M125.4 38.2h3.1 M138.8 38.2h4.2 M144.0 38.2h5.5 M157.5 38.2h9.9 M202.6 38.2h2.9 M20.8 40.3h40.7 M79.5 40.3h13.4 M102.8 40.3h2.7 M111.9 40.3h5.6 M125.3 40.3h3.2 M138.8 40.3h4.2 M144.0 40.3h3.5 M157.5 40.3h22.7 M201.6 40.3h3.9 M20.8 42.3h25.8 M79.5 42.3h6.7 M103.7 42.3h1.8 M113.8 42.3h3.7 M124.8 42.3h3.7 M138.2 42.3h4.8 M144.0 42.3h3.1 M157.5 42.3h8.6 M202.7 42.3h2.8 M20.8 44.4h33.9 M79.5 44.4h10.4 M102.6 44.4h2.9 M112.4 44.4h5.1 M124.7 44.4h3.8 M138.1 44.4h4.9 M144.0 44.4h4.7 M157.5 44.4h9.4 M201.7 44.4h3.8 M20.8 46.4h49.3 M79.5 46.4h13.3 M102.8 46.4h2.7 M113.3 46.4h4.2 M125.0 46.4h3.5 M139.7 46.4h3.3 M144.0 46.4h4.6 M157.5 46.4h9.6 M203.4 46.4h2.1 M20.8 48.5h27.9 M79.5 48.5h6.6 M103.5 48.5h2.0 M114.3 48.5h3.2 M126.0 48.5h2.5 M139.5 48.5h3.5 M144.0 48.5h2.5 M157.5 48.5h14.4 M203.4 48.5h2.1 M20.8 50.5h52.8 M79.5 50.5h10.9 M103.8 50.5h1.7 M113.7 50.5h3.8 M125.1 50.5h3.4 M138.9 50.5h4.1 M144.0 50.5h2.6 M157.5 50.5h22.1 M201.5 50.5h4.0 M20.8 52.6h37.5 M79.5 52.6h9.6 M103.9 52.6h1.6 M114.2 52.6h3.3 M125.1 52.6h3.4 M139.2 52.6h3.8 M144.0 52.6h5.3 M157.5 52.6h11.1 M203.5 52.6h2.0 M20.8 54.6h55.7 M79.5 54.6h10.1 M103.8 54.6h1.7 M112.9 54.6h4.6 M125.9 54.6h2.6 M138.4 54.6h4.6 M144.0 54.6h5.9 M157.5 54.6h22.3 M202.1 54.6h3.4 M20.8 56.7h29.9 M79.5 56.7h8.5 M103.7 56.7h1.8 M112.2 56.7h5.3 M124.7 56.7h3.8 M137.7 56.7h5.3 M144.0 56.7h3.4 M157.5 56.7h12.1 M201.9 56.7h3.6 M20.8 58.7h56.9 M79.5 58.7h13.1 M102.8 58.7h2.7 M112.0 58.7h5.5 M124.2 58.7h4.3 M139.3 58.7h3.7 M144.0 58.7h4.1 M157.5 58.7h14.2 M203.4 58.7h2.1 M20.8 60.8h21.2 M79.5 60.8h7.7 M103.6 60.8h1.9 M112.4 60.8h5.1 M123.6 60.8h4.9 M138.7 60.8h4.3 M144.0 60.8h5.8 M157.5 60.8h24.3 M201.6 60.8h3.9 M20.8 62.8h33.8 M79.5 62.8h7.2 M103.7 62.8h1.8 M113.9 62.8h3.6 M125.5 62.8h3.0 M138.1 62.8h4.9 M144.0 62.8h5.6 M157.5 62.8h22.0 M202.5 62.8h3.0 M20.8 64.9h44.5 M79.5 64.9h12.6 M103.9 64.9h1.6 M112.5 64.9h5.0 M123.7 64.9h4.8 M137.7 64.9h5.3 M144.0 64.9h5.0 M157.5 64.9h16.2 M203.1 64.9h2.4 M20.8 66.9h49.6 M79.5 66.9h8.2 M102.8 66.9h2.7 M111.6 66.9h5.9 M125.0 66.9h3.5 M138.8 66.9h4.2 M144.0 66.9h5.8 M157.5 66.9h20.1 M203.2 66.9h2.3 M20.8 69.0h24.9 M79.5 69.0h6.5 M102.6 69.0h2.9 M112.1 69.0h5.4 M125.6 69.0h2.9 M137.5 69.0h5.5 M144.0 69.0h5.9 M157.5 69.0h19.0 M202.8 69.0h2.7 M20.8 71.0h40.6 M79.5 71.0h6.3 M104.0 71.0h1.5 M111.6 71.0h5.9 M124.4 71.0h4.1 M138.4 71.0h4.6 M144.0 71.0h5.7 M157.5 71.0h15.5 M201.8 71.0h3.7 M20.8 73.1h51.0 M79.5 73.1h7.1 M103.6 73.1h1.9 M113.6 73.1h3.9 M125.4 73.1h3.1 M138.2 73.1h4.8 M144.0 73.1h3.1 M157.5 73.1h15.2 M203.2 73.1h2.3 M20.8 75.1h54.1 M79.5 75.1h8.4 M103.3 75.1h2.2 M112.7 75.1h4.8 M123.7 75.1h4.8 M138.7 75.1h4.3 M144.0 75.1h5.7 M157.5 75.1h16.6 M202.4 75.1h3.1 M20.8 77.2h39.7 M79.5 77.2h5.3 M103.3 77.2h2.2 M114.0 77.2h3.5 M126.0 77.2h2.5 M137.6 77.2h5.4 M144.0 77.2h2.8 M157.5 77.2h16.1 M202.0 77.2h3.5 M20.8 79.2h40.9 M79.5 79.2h8.1 M103.2 79.2h2.3 M112.8 79.2h4.7 M124.0 79.2h4.5 M139.7 79.2h3.3 M144.0 79.2h4.3 M157.5 79.2h12.5 M202.9 79.2h2.6 M20.8 81.3h49.0 M79.5 81.3h9.9 M103.2 81.3h2.3 M112.2 81.3h5.3 M123.7 81.3h4.8 M138.7 81.3h4.3 M144.0 81.3h4.5 M157.5 81.3h16.6 M202.5 81.3h3.0 M20.8 83.3h46.0 M79.5 83.3h9.3 M103.2 83.3h2.3 M113.1 83.3h4.4 M123.6 83.3h4.9 M137.9 83.3h5.1 M144.0 83.3h5.5 M157.5 83.3h23.6 M203.0 83.3h2.5 M20.8 85.4h41.0 M79.5 85.4h14.0 M102.7 85.4h2.8 M114.1 85.4h3.4 M125.7 85.4h2.8 M138.7 85.4h4.3 M144.0 85.4h2.4 M157.5 85.4h12.4 M203.4 85.4h2.1 M20.8 87.4h45.1 M79.5 87.4h12.5 M102.7 87.4h2.8 M114.0 87.4h3.5 M124.2 87.4h4.3 M138.0 87.4h5.0 M144.0 87.4h2.7 M157.5 87.4h22.6 M201.6 87.4h3.9 M20.8 89.5h28.3 M79.5 89.5h14.1 M103.4 89.5h2.1 M113.0 89.5h4.5 M123.5 89.5h5.0 M137.5 89.5h5.5 M144.0 89.5h2.7 M157.5 89.5h15.4 M202.5 89.5h3.0 M20.8 91.5h32.8 M79.5 91.5h6.9 M103.5 91.5h2.0 M112.3 91.5h5.2 M126.0 91.5h2.5 M138.3 91.5h4.7 M144.0 91.5h3.8 M157.5 91.5h8.9 M202.8 91.5h2.7 M20.8 93.6h43.4 M79.5 93.6h9.9 M103.9 93.6h1.6 M111.5 93.6h6.0 M124.0 93.6h4.5 M137.1 93.6h5.9 M144.0 93.6h2.5 M157.5 93.6h12.8 M203.4 93.6h2.1 M20.8 95.6h49.2 M79.5 95.6h7.6 M103.8 95.6h1.7 M113.2 95.6h4.3 M123.7 95.6h4.8 M137.5 95.6h5.5 M144.0 95.6h3.1 M157.5 95.6h11.0 M201.7 95.6h3.8 M20.8 97.7h41.5 M79.5 97.7h11.7 M103.9 97.7h1.6 M114.3 97.7h3.2 M124.3 97.7h4.2 M138.7 97.7h4.3 M144.0 97.7h2.4 M157.5 97.7h23.5 M202.2 97.7h3.3 M20.8 99.7h50.1 M79.5 99.7h5.9 M102.7 99.7h2.8 M114.3 99.7h3.2 M123.8 99.7h4.7 M138.6 99.7h4.4 M144.0 99.7h3.4 M157.5 99.7h17.4 M201.6 99.7h3.9 M20.8 101.8h30.1 M79.5 101.8h6.3 M103.2 101.8h2.3 M113.8 101.8h3.7 M125.7 101.8h2.8 M139.5 101.8h3.5 M144.0 101.8h2.3 M157.5 101.8h11.8 M202.9 101.8h2.6 M20.8 103.8h31.5 M79.5 103.8h12.2 M103.6 103.8h1.9 M113.0 103.8h4.5 M125.6 103.8h2.9 M139.0 103.8h4.0 M144.0 103.8h2.2 M157.5 103.8h12.6 M203.5 103.8h2.0" stroke="#666" stroke-width="0.65" opacity="0.5" stroke-dasharray="1.4 0.5"/></svg>
 </div>
</div>
  <div class="t" style="left:43.4px;top:135.4px;font-size:13px;color:#202124;-webkit-text-stroke:0.2px #202124">Spreadsheet Numbers.xls</div>
  <div class="t" style="left:15.5px;top:160.2px;font-size:12.1px;color:#6b7075">You opened just now</div>
  <svg style="left:16px;top:134.2px" width="16" height="16"><rect x="0" y="0" width="16" height="16" rx="1.4" fill="#1fa463"/>
    <path d="M4.4 3.6 L11.6 12.4 M11.6 3.6 L4.4 12.4" stroke="#fff" stroke-width="1.9"/></svg>
</div>
</div>

<!-- ============ TABLE ============ -->
<div class="t" style="left:256.8px;top:471px;font-size:12.5px;color:#63676b;font-weight:400;letter-spacing:0.1px;-webkit-text-stroke:0.15px #63676b">Name</div>
<svg style="left:0;top:0" width="1200" height="800"><path d="M309 472 V481.5 M303.6 476.3 L309 481.6 L314.4 476.3" fill="none" stroke="#3c4043" stroke-width="1.3"/></svg>
<div class="t" style="left:645.2px;top:471px;font-size:12.6px;color:#63676b;font-weight:400;;-webkit-text-stroke:0.15px #63676b">Owner</div>
<div class="t" style="left:784.6px;top:469.8px;font-size:13.25px;color:#63676b;font-weight:400;;-webkit-text-stroke:0.15px #63676b">Last modified</div>
<div class="t" style="left:929px;top:470.8px;font-size:12.9px;color:#63676b;font-weight:400;;-webkit-text-stroke:0.15px #63676b">File size</div>
<div class="a" style="left:257px;top:496px;width:806px;height:1px;background:#e0e0e0"></div>
<div class="a" style="left:257px;top:544px;width:806px;height:1px;background:#e0e0e0"></div>
<div class="a" style="left:257px;top:592px;width:806px;height:1px;background:#e0e0e0"></div>
<div class="a" style="left:257px;top:640px;width:806px;height:1px;background:#e0e0e0"></div>
<div class="a" style="left:257px;top:688px;width:806px;height:1px;background:#e0e0e0"></div>
<div class="a" style="left:257px;top:736px;width:806px;height:1px;background:#e0e0e0"></div>
<div class="a" style="left:257px;top:784px;width:806px;height:1px;background:#e0e0e0"></div>
<div class="t" style="left:313.6px;top:515.86px;font-size:12.9px;color:#202124;font-weight:400;-webkit-text-stroke:0.2px #202124;">Examples</div>
<div class="t" style="left:643.6px;top:515.00px;font-size:12.5px;color:#70757a;font-weight:400;">me</div>
<div class="t" style="left:784px;top:515.00px;font-size:12.75px;color:#70757a;font-weight:400;">Dec 8, 2017<span style="margin-left:5.5px">me</span></div>
<div class="a" style="left:929px;top:519.6px;width:8.2px;height:1.1px;background:#8a8e92"></div>
<div class="t" style="left:313.6px;top:563.86px;font-size:12.9px;color:#202124;font-weight:400;-webkit-text-stroke:0.2px #202124;">Work Finances</div>
<div class="t" style="left:643.6px;top:563.00px;font-size:12.5px;color:#70757a;font-weight:400;">me</div>
<div class="t" style="left:784px;top:563.00px;font-size:12.75px;color:#70757a;font-weight:400;">3:05 PM<span style="margin-left:5.5px">me</span></div>
<div class="a" style="left:929px;top:567.6px;width:8.2px;height:1.1px;background:#8a8e92"></div>
<div class="t" style="left:313.6px;top:611.86px;font-size:12.9px;color:#202124;font-weight:400;-webkit-text-stroke:0.2px #202124;">Spreadsheet Numbers.xls</div>
<div class="t" style="left:643.6px;top:611.00px;font-size:12.5px;color:#70757a;font-weight:400;">me</div>
<div class="t" style="left:784px;top:611.00px;font-size:12.75px;color:#70757a;font-weight:400;">3:06 PM<span style="margin-left:5.5px">me</span></div>
<div class="t" style="left:928.0px;top:611.00px;font-size:12.4px;color:#70757a;font-weight:400;">38 KB</div>
<div class="t" style="left:313.6px;top:659.86px;font-size:12.9px;color:#202124;font-weight:400;-webkit-text-stroke:0.2px #202124;">Q1 Summary</div>
<div class="t" style="left:643.6px;top:659.00px;font-size:12.5px;color:#70757a;font-weight:400;">me</div>
<div class="t" style="left:784px;top:659.00px;font-size:12.75px;color:#70757a;font-weight:400;">3:07 PM<span style="margin-left:5.5px">me</span></div>
<div class="a" style="left:929px;top:663.6px;width:8.2px;height:1.1px;background:#8a8e92"></div>
<div class="t" style="left:313.6px;top:707.86px;font-size:12.9px;color:#202124;font-weight:400;-webkit-text-stroke:0.2px #202124;">Q1 Details</div>
<div class="t" style="left:643.6px;top:707.00px;font-size:12.5px;color:#70757a;font-weight:400;">me</div>
<div class="t" style="left:784px;top:707.00px;font-size:12.75px;color:#70757a;font-weight:400;">3:10 PM<span style="margin-left:5.5px">me</span></div>
<div class="a" style="left:929px;top:711.6px;width:8.2px;height:1.1px;background:#8a8e92"></div>
<div class="t" style="left:313.6px;top:755.86px;font-size:12.9px;color:#202124;font-weight:400;-webkit-text-stroke:0.2px #202124;">How to get started with Drive</div>
<div class="t" style="left:643.6px;top:755.00px;font-size:12.5px;color:#70757a;font-weight:400;">me</div>
<div class="t" style="left:784px;top:755.00px;font-size:12.75px;color:#70757a;font-weight:400;">Jul 25, 2014<span style="margin-left:5.5px">me</span></div>
<div class="t" style="left:928.0px;top:755.00px;font-size:12.4px;color:#70757a;font-weight:400;">3 MB</div>

<svg style="left:276px;top:512.8px" width="20" height="16"><path d="M1.6 0 H8 L10 2.4 H18.4 Q20 2.4 20 4 V14.4 Q20 16 18.4 16 H1.6 Q0 16 0 14.4 V1.6 Q0 0 1.6 0 Z" fill="#5f6368"/></svg>
<svg style="left:278px;top:560.8px" width="16" height="16"><rect x="0" y="0" width="16" height="16" rx="1.4" fill="#1fa463"/>
    <rect x="2.5" y="4.2" width="11" height="2.6" fill="#fff"/>
    <rect x="4.6" y="4.2" width="2.6" height="9.3" fill="#fff"/></svg>
<svg style="left:278px;top:608.8px" width="16" height="16"><rect x="0" y="0" width="16" height="16" rx="1.4" fill="#1fa463"/>
    <path d="M4.4 3.6 L11.6 12.4 M11.6 3.6 L4.4 12.4" stroke="#fff" stroke-width="1.9"/></svg>
<svg style="left:278px;top:656.8px" width="16" height="16"><rect x="0" y="0" width="16" height="16" rx="1.6" fill="#4285f4"/>
    <rect x="3" y="3.2" width="10" height="1.7" fill="#fff"/>
    <rect x="3" y="7" width="10" height="1.7" fill="#fff"/>
    <rect x="3" y="10.8" width="6" height="1.7" fill="#fff"/></svg>
<svg style="left:278px;top:704.8px" width="16" height="16"><rect x="0" y="0" width="16" height="16" rx="1.6" fill="#4285f4"/>
    <rect x="3" y="3.2" width="10" height="1.7" fill="#fff"/>
    <rect x="3" y="7" width="10" height="1.7" fill="#fff"/>
    <rect x="3" y="10.8" width="6" height="1.7" fill="#fff"/></svg>
<svg style="left:278px;top:752.8px" width="16" height="16"><rect x="0" y="0" width="16" height="16" rx="1.4" fill="#ea4335"/>
    <text x="8" y="10.6" font-family="Liberation Sans" font-size="6.4" font-weight="700" fill="#fff" text-anchor="middle" letter-spacing="-0.3">PDF</text></svg>
<svg style="left:0;top:0" width="1200" height="800">
  <path d="M0 0 H3 Q0.6 0.6 0 3 Z" fill="#2d5a2e"/>
  <path d="M1200 0 H1196 Q1199.4 0.6 1200 4 Z" fill="#2d5a2e"/>
  <path d="M0 800 V796 Q0.6 799.4 3 800 Z" fill="#2d5a2e"/>
  <path d="M1200 800 V796 Q1199.4 799.4 1197 800 Z" fill="#2d5a2e"/>
  <rect x="0" y="0" width="1200" height="1" fill="#e6e8eb"/>
</svg>
</body></html>
